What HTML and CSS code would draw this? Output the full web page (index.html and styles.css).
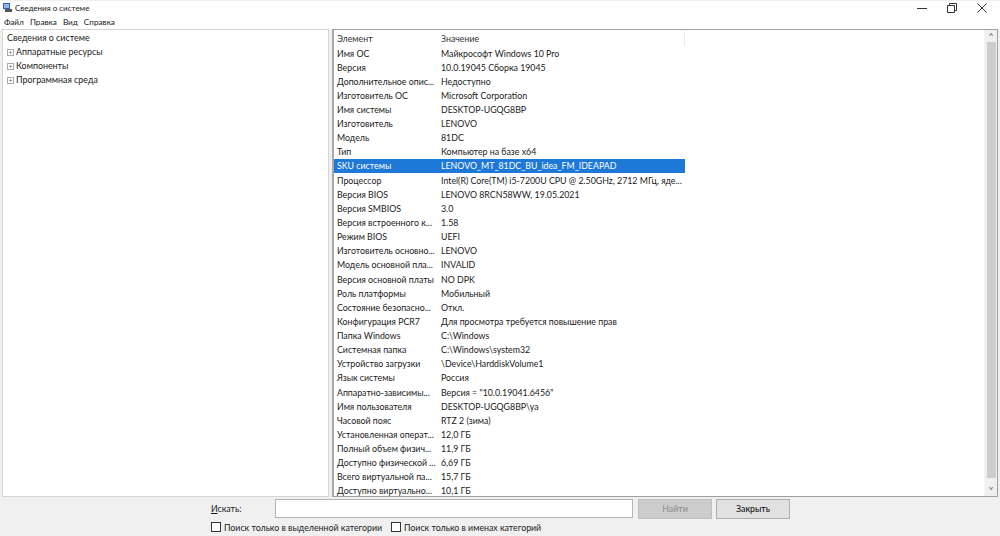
FILE: index.html
```html
<!DOCTYPE html>
<html lang="ru">
<head>
    <meta charset="UTF-8">
    <title>Сведения о системе</title>
    <link rel="stylesheet" href="styles.css">
</head>
<body>
    <div class="window">
        <div class="titlebar">
            <svg class="app-icon" width="9" height="9" viewBox="0 0 9 9">
                <rect x="0" y="0" width="7" height="6" fill="#3a5fb0"/>
                <rect x="1" y="1" width="5" height="4" fill="#8fb4e8"/>
                <rect x="2" y="6" width="7" height="3" fill="#555"/>
            </svg>
            <span class="title">Сведения о системе</span>
            <div class="controls">
                <svg width="10" height="10" viewBox="0 0 10 10"><path d="M0 5.5h10" stroke="#333" stroke-width="1"/></svg>
                <svg width="10" height="10" viewBox="0 0 10 10"><path d="M0.5 2.5h7v7h-7z M2.5 2.5v-2h7v7h-2" fill="none" stroke="#333" stroke-width="1"/></svg>
                <svg width="10" height="10" viewBox="0 0 10 10"><path d="M0.5 0.5l9 9M9.5 0.5l-9 9" stroke="#333" stroke-width="1"/></svg>
            </div>
        </div>
        <div class="menubar">
            <span>Файл</span><span>Правка</span><span>Вид</span><span>Справка</span>
        </div>
        <div class="main">
            <div class="tree">
                <div class="node root">Сведения о системе</div>
                <div class="node"><span class="expander">+</span>Аппаратные ресурсы</div>
                <div class="node"><span class="expander">+</span>Компоненты</div>
                <div class="node"><span class="expander">+</span>Программная среда</div>
            </div>
            <div class="details">
                <div class="list">
                    <div class="row head"><span class="c1">Элемент</span><span class="c2">Значение</span><span class="c3"></span></div>
                    <div class="row"><span class="c1">Имя ОС</span><span class="c2">Майкрософт Windows 10 Pro</span></div>
                    <div class="row"><span class="c1">Версия</span><span class="c2">10.0.19045 Сборка 19045</span></div>
                    <div class="row"><span class="c1">Дополнительное опис...</span><span class="c2">Недоступно</span></div>
                    <div class="row"><span class="c1">Изготовитель ОС</span><span class="c2">Microsoft Corporation</span></div>
                    <div class="row"><span class="c1">Имя системы</span><span class="c2">DESKTOP-UGQG8BP</span></div>
                    <div class="row"><span class="c1">Изготовитель</span><span class="c2">LENOVO</span></div>
                    <div class="row"><span class="c1">Модель</span><span class="c2">81DC</span></div>
                    <div class="row"><span class="c1">Тип</span><span class="c2">Компьютер на базе x64</span></div>
                    <div class="row selected"><span class="c1">SKU системы</span><span class="c2">LENOVO_MT_81DC_BU_idea_FM_IDEAPAD</span></div>
                    <div class="row"><span class="c1">Процессор</span><span class="c2">Intel(R) Core(TM) i5-7200U CPU @ 2.50GHz, 2712 МГц, яде...</span></div>
                    <div class="row"><span class="c1">Версия BIOS</span><span class="c2">LENOVO 8RCN58WW, 19.05.2021</span></div>
                    <div class="row"><span class="c1">Версия SMBIOS</span><span class="c2">3.0</span></div>
                    <div class="row"><span class="c1">Версия встроенного к...</span><span class="c2">1.58</span></div>
                    <div class="row"><span class="c1">Режим BIOS</span><span class="c2">UEFI</span></div>
                    <div class="row"><span class="c1">Изготовитель основно...</span><span class="c2">LENOVO</span></div>
                    <div class="row"><span class="c1">Модель основной пла...</span><span class="c2">INVALID</span></div>
                    <div class="row"><span class="c1">Версия основной платы</span><span class="c2">NO DPK</span></div>
                    <div class="row"><span class="c1">Роль платформы</span><span class="c2">Мобильный</span></div>
                    <div class="row"><span class="c1">Состояние безопасно...</span><span class="c2">Откл.</span></div>
                    <div class="row"><span class="c1">Конфигурация PCR7</span><span class="c2">Для просмотра требуется повышение прав</span></div>
                    <div class="row"><span class="c1">Папка Windows</span><span class="c2">C:\Windows</span></div>
                    <div class="row"><span class="c1">Системная папка</span><span class="c2">C:\Windows\system32</span></div>
                    <div class="row"><span class="c1">Устройство загрузки</span><span class="c2">\Device\HarddiskVolume1</span></div>
                    <div class="row"><span class="c1">Язык системы</span><span class="c2">Россия</span></div>
                    <div class="row"><span class="c1">Аппаратно-зависимы...</span><span class="c2">Версия = "10.0.19041.6456"</span></div>
                    <div class="row"><span class="c1">Имя пользователя</span><span class="c2">DESKTOP-UGQG8BP\ya</span></div>
                    <div class="row"><span class="c1">Часовой пояс</span><span class="c2">RTZ 2 (зима)</span></div>
                    <div class="row"><span class="c1">Установленная операт...</span><span class="c2">12,0 ГБ</span></div>
                    <div class="row"><span class="c1">Полный объем физич...</span><span class="c2">11,9 ГБ</span></div>
                    <div class="row"><span class="c1">Доступно физической ...</span><span class="c2">6,69 ГБ</span></div>
                    <div class="row"><span class="c1">Всего виртуальной па...</span><span class="c2">15,7 ГБ</span></div>
                    <div class="row"><span class="c1">Доступно виртуально...</span><span class="c2">10,1 ГБ</span></div>
                </div>
                <div class="scrollbar">
                    <span class="arrow">&#x2C4;</span>
                    <div class="thumb"></div>
                    <span class="arrow">&#x2C5;</span>
                </div>
            </div>
        </div>
        <div class="bottom">
            <div class="search-row">
                <span class="label"><u>И</u>скать:</span>
                <div class="input"></div>
                <div class="btn disabled">Найти</div>
                <div class="btn">Закрыть</div>
            </div>
            <div class="check-row">
                <label class="check"><span class="box"></span>Поиск только в выделенной категории</label>
                <label class="check"><span class="box"></span>Поиск только в именах категорий</label>
            </div>
        </div>
    </div>
</body>
</html>
```

FILE: styles.css
```css
body, html {
    margin: 0;
    padding: 0;
    background: #f0f0f0;
    font-family: Lato, 'Noto Sans', sans-serif;
    font-size: 8.8px;
    color: #1a1a1a;
}
.window {
    width: 1000px;
    height: 536px;
    display: flex;
    flex-direction: column;
    background: #f0f0f0;
    border-top: 1px solid transparent;
    box-sizing: border-box;
}
.titlebar {
    height: 13px;
    display: flex;
    align-items: center;
    background: #fff;
    padding-left: 3px;
}
.app-icon {
    margin-right: 3px;
}
.title {
    font-size: 8px;
    color: #222;
}
.controls {
    margin-left: auto;
    display: flex;
    gap: 20px;
    padding-right: 13px;
}
.menubar {
    height: 15px;
    display: flex;
    align-items: center;
    gap: 6px;
    padding-left: 4px;
    background: #fff;
    font-size: 8.2px;
}
.main {
    height: 468px;
    display: flex;
    gap: 3px;
    padding: 0 2px;
    background: #f0f0f0;
}
.tree {
    width: 325px;
    background: #fff;
    border: 1px solid #d4d4d4;
    padding-top: 1px;
    font-size: 8.9px;
}
.node {
    height: 14px;
    line-height: 14px;
    display: flex;
    align-items: center;
    padding-left: 3px;
    white-space: nowrap;
}
.node.root {
    padding-left: 4px;
}
.expander {
    width: 5px;
    height: 5px;
    border: 1px solid #aaa;
    font-size: 6px;
    line-height: 5px;
    text-align: center;
    color: #555;
    margin-right: 2px;
    margin-left: 1px;
    overflow: hidden;
}
.details {
    flex: 1;
    display: flex;
    background: #fff;
    border: 1px solid #a0a0a0;
    border-left: 2px solid #a8a8a8;
}
.list {
    flex: 1;
    padding-top: 1px;
}
.row {
    height: 14.125px;
    display: flex;
    align-items: center;
    white-space: nowrap;
}
.row.head {
    height: 15px;
    color: #333;
}
.c1 {
    width: 103px;
    padding-left: 3px;
    box-sizing: border-box;
    overflow: hidden;
}
.c2 {
    width: 248px;
    padding-left: 4px;
    box-sizing: border-box;
    overflow: hidden;
}
.row.head .c2 {
    border-right: 1px solid #eaeaea;
    height: 15px;
    line-height: 15px;
}
.row.selected {
    color: #fff;
}
.row.selected .c1,
.row.selected .c2 {
    background: #1e78d8;
    height: 14px;
    line-height: 14px;
}
.scrollbar {
    width: 12px;
    display: flex;
    flex-direction: column;
    align-items: center;
    background: #f0f0f0;
    border-left: 1px solid #f4f4f4;
}
.arrow {
    height: 12px;
    line-height: 12px;
    font-size: 10px;
    color: #606060;
}
.thumb {
    flex: 1;
    width: 9px;
    background: #cdcdcd;
    margin-bottom: 6px;
}
.bottom {
    flex: 1;
    display: flex;
    flex-direction: column;
    padding-left: 211px;
    padding-top: 2px;
}
.search-row {
    display: flex;
    align-items: center;
    height: 19px;
}
.label {
    width: 64px;
}
.input {
    width: 356px;
    height: 17px;
    background: #fff;
    border: 1px solid #b4b4b4;
}
.btn {
    width: 72px;
    height: 18px;
    margin-left: 4px;
    background: #e1e1e1;
    border: 1px solid #adadad;
    text-align: center;
    line-height: 18px;
    color: #000;
}
.btn.disabled {
    margin-left: 5px;
    background: #cccccc;
    border-color: #bfbfbf;
    color: #8a8a8a;
}
.check-row {
    display: flex;
    align-items: center;
    gap: 9px;
    height: 18px;
}
.check {
    display: flex;
    align-items: center;
}
.box {
    width: 8px;
    height: 8px;
    border: 1px solid #333;
    background: #fff;
    margin-right: 3px;
}
```
